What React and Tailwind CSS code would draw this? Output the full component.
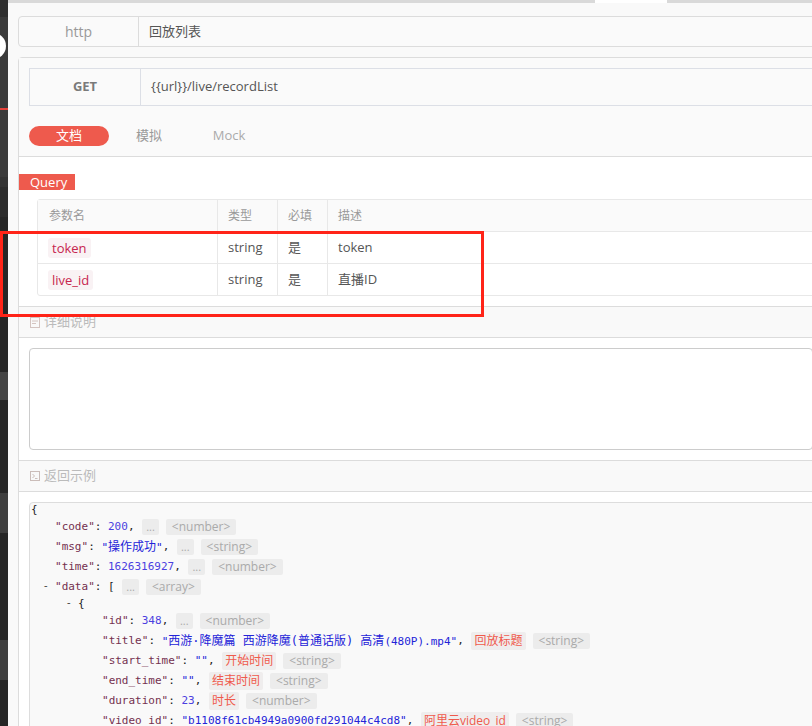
import React from 'react';

const sans = "font-['Open_Sans','Noto_Sans_CJK_SC',sans-serif]";
const mono = "font-['DejaVu_Sans_Mono','Noto_Sans_CJK_SC',monospace]";

const Key = ({ children }) => <span className="text-[#74304f]">"{children}"</span>;
const Num = ({ children }) => <span className="text-[#4b3fe0]">{children}</span>;
const Str = ({ children }) => <span className="text-[#2323d8]">"{children}"</span>;
const Cjk = ({ children }) => <span className="text-[12px]">{children}</span>;

const Dots = () => (
  <span className={`${sans} ml-[1px] h-[16px] leading-[15px] px-[4px] rounded-[2px] bg-[#ececec] text-[#aaa] text-[11px]`}>
    ...
  </span>
);

const Type = ({ children }) => (
  <span className={`${sans} ml-[7px] h-[16px] leading-[16px] px-[6px] rounded-[2px] bg-[#ececec] text-[#aaa] text-[12px]`}>
    &lt;{children}&gt;
  </span>
);

const Desc = ({ children }) => (
  <span className={`${sans} ml-[1px] h-[18px] leading-[18px] px-[3px] rounded-[2px] bg-[#efeded] text-[#ef5a4c] text-[12px]`}>
    {children}
  </span>
);

const Line = ({ pl, h = 'h-[20px]', children }) => (
  <div className={`flex items-center whitespace-pre ${h}`} style={{ paddingLeft: pl }}>
    {children}
  </div>
);

const Dash = () => <span className={`${sans} w-[11px] text-[#333] text-[11px] -mt-[4px]`}>-</span>;

const NoteIcon = () => (
  <svg width="10" height="11" viewBox="0 0 10 11" className="mr-[4px]">
    <rect x="0.5" y="0.5" width="9" height="10" fill="none" stroke="#d4c4c0" />
    <line x1="2" y1="4" x2="8" y2="4" stroke="#d4c4c0" />
    <line x1="2" y1="6.5" x2="6" y2="6.5" stroke="#d4c4c0" />
  </svg>
);

const TermIcon = () => (
  <svg width="10" height="10" viewBox="0 0 10 10" className="mr-[4px]">
    <rect x="0.5" y="0.5" width="9" height="9" fill="none" stroke="#cbbdb9" />
    <path d="M2.5 3 L4.5 5 L2.5 7" fill="none" stroke="#cbbdb9" />
    <line x1="5" y1="7.5" x2="7.5" y2="7.5" stroke="#cbbdb9" />
  </svg>
);

const SideStrip = () => (
  <div className="w-[8px] flex flex-col shrink-0 bg-[#262626] overflow-hidden">
    <div className="h-[17px] shrink-0 bg-[#2f2f2f]" />
    <div className="h-[91px] shrink-0 bg-[#3a3a3a] flex flex-col">
      <div className="w-[26px] h-[26px] shrink-0 rounded-full bg-white -ml-[20px] mt-[16px]" />
    </div>
    <div className="h-[2px] shrink-0 bg-[#e4423a]" />
    <div className="h-[67px] shrink-0 bg-[#3a3a3a]" />
    <div className="h-[10px] shrink-0 bg-[#333]" />
    <div className="h-[30px] shrink-0 bg-[#2c2c2c]" />
    <div className="h-[155px] shrink-0 bg-[#262626]" />
    <div className="h-[28px] shrink-0 bg-[#444]" />
    <div className="h-[93px] shrink-0 bg-[#262626]" />
    <div className="h-[40px] shrink-0 bg-[#3e3e3e]" />
    <div className="h-[107px] shrink-0 bg-[#262626]" />
    <div className="h-[40px] shrink-0 bg-[#3e3e3e]" />
    <div className="flex-1 bg-[#262626]" />
  </div>
);

const params = [
  { name: 'token', type: 'string', req: '是', desc: 'token' },
  { name: 'live_id', type: 'string', req: '是', desc: '直播ID' },
];

export default function App() {
  return (
    <div className={`relative w-[812px] h-[726px] overflow-hidden flex bg-[#f9f9f9] ${sans}`}>
      <SideStrip />
      <div className="flex-1 flex flex-col min-w-0">
        {/* tab strip */}
        <div className="h-[3px] shrink-0 flex bg-[#d9d9d9]">
          <div className="w-[587px]" />
          <div className="w-[72px] bg-white" />
        </div>

        <div className="shrink-0 pl-[10px] pt-[13px] -mr-[12px] flex flex-col">
          {/* name row */}
          <div className="h-[31px] flex border border-[#dcdcdc] rounded-[4px] bg-[#fafafa]">
            <div className="w-[120px] border-r border-[#dcdcdc] flex items-center justify-center text-[14px] text-[#999]">
              http
            </div>
            <div className="pl-[10px] flex items-center text-[13px] text-[#555]">回放列表</div>
          </div>

          {/* main panel */}
          <div className="mt-[10px] border border-[#dcdcdc] rounded-[4px] flex flex-col">
            <div className="bg-[#fafafa] px-[10px] pt-[10px] pb-[10px] border-b border-[#dcdcdc]">
              <div className="h-[38px] flex border border-[#dcdfe6] bg-[#fafafa]">
                <div className="w-[111px] border-r border-[#dcdfe6] flex items-center justify-center text-[13px] font-bold text-[#7a7a7a]">
                  GET
                </div>
                <div className="pl-[10px] flex items-center text-[13px] text-[#555]">{'{{url}}/live/recordList'}</div>
              </div>
              <div className="mt-[20px] flex h-[20px] text-[13px]">
                <div className="w-[80px] rounded-full bg-[#ee5a4d] text-white flex items-center justify-center">文档</div>
                <div className="w-[80px] text-[#999] flex items-center justify-center">模拟</div>
                <div className="w-[80px] text-[#aaa] flex items-center justify-center">Mock</div>
              </div>
            </div>

            {/* query */}
            <div className="bg-white pt-[17px] pb-[10px] flex flex-col">
              <div className="w-[56px] h-[16px] bg-[#ee5a4d] text-white text-[13px] leading-[16px] pl-[11px]">Query</div>
              <div className="ml-[18px] mt-[9px] border border-[#e8e8e8] rounded-[3px] text-[13px]">
                <div className="grid grid-cols-[180px_60px_50px_1fr] h-[31px] bg-[#fafafa] text-[#999] text-[12px]">
                  <div className="pl-[11px] flex items-center border-r border-[#e8e8e8]">参数名</div>
                  <div className="pl-[10px] flex items-center border-r border-[#e8e8e8]">类型</div>
                  <div className="pl-[10px] flex items-center border-r border-[#e8e8e8]">必填</div>
                  <div className="pl-[10px] flex items-center">描述</div>
                </div>
                {params.map((p) => (
                  <div key={p.name} className="grid grid-cols-[180px_60px_50px_1fr] h-[32px] border-t border-[#e8e8e8] text-[#555]">
                    <div className="pl-[10px] flex items-center border-r border-[#e8e8e8]">
                      <span className="px-[4px] h-[20px] leading-[20px] rounded-[3px] bg-[#f9f2f4] text-[#c7254e]">{p.name}</span>
                    </div>
                    <div className="pl-[10px] flex items-center border-r border-[#e8e8e8]">{p.type}</div>
                    <div className="pl-[10px] flex items-center border-r border-[#e8e8e8]">{p.req}</div>
                    <div className="pl-[10px] flex items-center">{p.desc}</div>
                  </div>
                ))}
              </div>
            </div>

            {/* detail */}
            <div className="h-[32px] border-y border-[#dcdcdc] bg-[#f9f9f9] pl-[11px] flex items-center text-[13px] text-[#bbb]">
              <NoteIcon />
              详细说明
            </div>
            <div className="bg-white p-[10px]">
              <div className="h-[102px] border border-[#cccccc] rounded-[4px] bg-white" />
            </div>

            {/* response example */}
            <div className="h-[32px] border-y border-[#dcdcdc] bg-[#f9f9f9] pl-[11px] flex items-center text-[13px] text-[#bbb]">
              <TermIcon />
              返回示例
            </div>
            <div className="bg-white pl-[10px] pt-[10px] h-[300px]">
              <div className={`${mono} text-[11px] text-[#222] border border-[#dddddd] rounded-tl-[4px] bg-[#f9f9f9] h-[300px]`}>
                <Line pl={1} h="h-[14px]">{'{'}</Line>
                <Line pl={25}>
                  <Key>code</Key>: <Num>200</Num>, <Dots /><Type>number</Type>
                </Line>
                <Line pl={25}>
                  <Key>msg</Key>: <Str><Cjk>操作成功</Cjk></Str>, <Dots /><Type>string</Type>
                </Line>
                <Line pl={25}>
                  <Key>time</Key>: <Num>1626316927</Num>, <Dots /><Type>number</Type>
                </Line>
                <Line pl={14}>
                  <Dash /><Key>data</Key>: [ <Dots /><Type>array</Type>
                </Line>
                <Line pl={37} h="h-[14px]">
                  <Dash />{'{'}
                </Line>
                <Line pl={72}>
                  <Key>id</Key>: <Num>348</Num>, <Dots /><Type>number</Type>
                </Line>
                <Line pl={72}>
                  <Key>title</Key>: <Str><Cjk>西游·降魔篇 西游降魔(普通话版) 高清</Cjk>(480P).mp4</Str>, <Desc>回放标题</Desc><Type>string</Type>
                </Line>
                <Line pl={72}>
                  <Key>start_time</Key>: <Str></Str>, <Desc>开始时间</Desc><Type>string</Type>
                </Line>
                <Line pl={72}>
                  <Key>end_time</Key>: <Str></Str>, <Desc>结束时间</Desc><Type>string</Type>
                </Line>
                <Line pl={72}>
                  <Key>duration</Key>: <Num>23</Num>, <Desc>时长</Desc><Type>number</Type>
                </Line>
                <Line pl={72}>
                  <Key>video_id</Key>: <Str>b1108f61cb4949a0900fd291044c4cd8</Str>, <Desc>阿里云video_id</Desc><Type>string</Type>
                </Line>
              </div>
            </div>
          </div>
        </div>
      </div>

      {/* annotation box */}
      <div className="absolute left-0 top-[231px] w-[484px] h-[86px] border-[3px] border-[#ff2418]" />
    </div>
  );
}
